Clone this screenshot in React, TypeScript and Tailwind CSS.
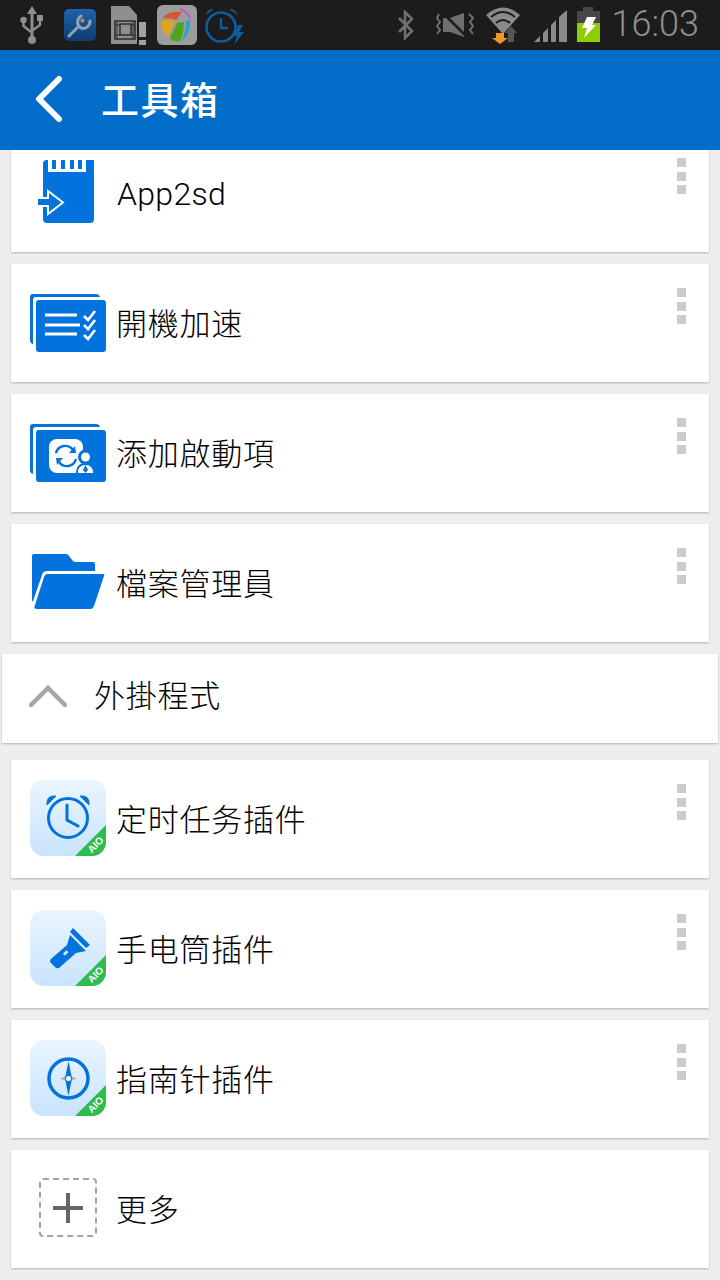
const CJK = '[font-family:Roboto,"Noto_Sans_CJK_SC",sans-serif]';

function UsbIcon() {
  return (
    <svg width="26" height="40" viewBox="0 0 26 40" className="ml-[19px] mt-[6px] shrink-0">
      <path d="M13 0 L8 8 H18 Z" fill="#8e8e8e" />
      <rect x="11.5" y="6" width="3" height="28" fill="#8e8e8e" />
      <circle cx="13" cy="34" r="4" fill="#8e8e8e" />
      <circle cx="4.5" cy="14" r="3.2" fill="#8e8e8e" />
      <rect x="18" y="9" width="6" height="6" fill="#8e8e8e" />
      <path d="M4.5 15 V20 L12 26 M21 14 V19 L14 24" stroke="#8e8e8e" strokeWidth="2.4" fill="none" />
    </svg>
  );
}

function WrenchTile() {
  return (
    <div className="ml-[19px] mt-[9px] h-[32px] w-[32px] shrink-0 rounded-[5px] bg-gradient-to-b from-[#1d64ac] to-[#0c3d70]">
      <svg width="32" height="32" viewBox="0 0 32 32">
        <path d="M5 27 L15 17 M17 7 A7 7 0 0 0 17 19 A7 7 0 0 0 26 12" stroke="#8fa3b6" strokeWidth="3" fill="none" strokeLinecap="round" />
        <circle cx="18.5" cy="11.5" r="2" fill="#d28a2e" />
      </svg>
    </div>
  );
}

function SimIcon() {
  return (
    <svg width="36" height="40" viewBox="0 0 36 40" className="ml-[15px] mt-[5px] shrink-0">
      <path d="M0 1 H18 L26 10 V39 H0 Z" fill="#8f8f8f" />
      <rect x="4" y="16" width="20" height="18" fill="none" stroke="#2c2c2c" strokeWidth="1.5" />
      <rect x="9" y="19" width="11" height="11" fill="none" stroke="#2c2c2c" strokeWidth="1.5" />
      <path d="M6 16 V34 M22 16 V34 M4 20 H9 M4 30 H9 M20 20 H24 M20 30 H24" stroke="#2c2c2c" strokeWidth="1" />
      <rect x="28" y="17" width="7" height="15" fill="#a0a0a0" />
      <rect x="28" y="35" width="7" height="5" fill="#a0a0a0" />
    </svg>
  );
}

function FruitTile() {
  return (
    <div className="ml-[10px] mt-[5px] h-[40px] w-[40px] shrink-0 rounded-[6px] bg-[#9c9c9c]">
      <svg width="40" height="40" viewBox="0 0 40 40">
        <path d="M5 14 Q11 5 25 7 L19 15 Q12 12 5 14 Z" fill="#d2592c" />
        <path d="M5 16 Q13 14 18 17 L11 31 Q3 26 5 16 Z" fill="#e2a41e" />
        <path d="M20 18 L27 17 Q27 28 23 36 Q17 37 13 33 Z" fill="#4ca618" />
        <path d="M29 16 L33 15 Q34 28 25 36 Q29 26 29 16 Z" fill="#22a8d0" />
        <path d="M23 4 Q30 6 33 13" stroke="#c456cc" strokeWidth="2" fill="none" />
      </svg>
    </div>
  );
}

function AlarmBolt() {
  return (
    <svg width="40" height="38" viewBox="0 0 40 38" className="ml-[8px] mt-[7px] shrink-0">
      <circle cx="16" cy="20" r="14.5" stroke="#0f5c9e" strokeWidth="2.6" fill="none" />
      <path d="M16 11 V21 H23" stroke="#0f5c9e" strokeWidth="2.4" fill="none" />
      <path d="M1 8 Q3 1 9 2 Z M24 2 Q30 1 33 8 Z" fill="#0f5c9e" />
      <path d="M33 18 L28 29 H32 L29 38 L39 25 H34 L38 18 Z" fill="#0f5c9e" />
    </svg>
  );
}

function StatusRight() {
  return (
    <div className="ml-auto flex items-start">
      <svg width="18" height="30" viewBox="0 0 18 30" className="mt-[10px] shrink-0">
        <path d="M2 8 L15 21 L8 28 V2 L15 9 L2 22" stroke="#6f6f6f" strokeWidth="2.6" fill="none" />
      </svg>
      <svg width="38" height="26" viewBox="0 0 38 26" className="ml-[21px] mt-[12px] shrink-0">
        <path d="M7 6 H14 L28 1 V25 L14 20 H7 Z" fill="#6f6f6f" />
        <path d="M8 2 L30 24" stroke="#1c1c1c" strokeWidth="2.5" />
        <path d="M3 2 L1 6 L4 10 L1 14 L4 18 L1 22 M33 2 L37 6 L34 10 L37 14 L34 18 L37 22" stroke="#6f6f6f" strokeWidth="2" fill="none" />
      </svg>
      <svg width="34" height="38" viewBox="0 0 34 38" className="ml-[12px] mt-[6px] shrink-0">
        <path d="M0 9 Q17 -6 34 9 L17 28 Z" fill="#8a8a8a" />
        <path d="M5 11 Q17 1 29 11" stroke="#1c1c1c" strokeWidth="2" fill="none" />
        <path d="M10 17 Q17 11 24 17" stroke="#1c1c1c" strokeWidth="2" fill="none" />
        <path d="M10 27 H18 V32 H22 L14 38 L6 32 H10 Z" fill="#f0962a" />
        <path d="M25 20 L31 27 H28 V36 H22 V27 H19 Z" fill="#555555" />
      </svg>
      <svg width="34" height="32" viewBox="0 0 34 32" className="ml-[14px] mt-[10px] shrink-0">
        <path d="M0 32 L6 26 V32 Z M9 23 L14 18 V32 H9 Z M17 15 L22 10 V32 H17 Z M25 7 L33 0 V32 H25 Z" fill="#8a8a8a" />
      </svg>
      <div className="ml-[9px] mt-[7px] flex w-[23px] shrink-0 flex-col items-center">
        <div className="h-[4px] w-[10px] bg-[#474747]" />
        <div className="relative h-[31px] w-[23px] bg-[#474747]">
          <div className="absolute inset-x-0 bottom-0 h-[19px] bg-[#8fcc00]" />
          <svg width="23" height="31" viewBox="0 0 23 31" className="absolute inset-0">
            <path d="M10 6 H19 L15 14 H19 L7 27 L10 17 H5 Z" fill="#ffffff" />
          </svg>
        </div>
      </div>
      <span className="ml-[12px] mr-[21px] mt-[2px] font-['Roboto'] text-[36px] font-light leading-[44px] text-[#8f8f8f]">16:03</span>
    </div>
  );
}

function SdIcon() {
  return (
    <svg width="60" height="66" viewBox="0 0 60 66" className="ml-[6px]">
      <path d="M7 4 Q7 0 11 0 H54 Q58 0 58 4 V59 Q58 63 54 63 H11 Q7 63 7 59 Z" fill="#0273dc" />
      <path d="M12 0 V12 H54 V0 Z" fill="#ffffff" />
      <rect x="16" y="0" width="4" height="9" fill="#0273dc" />
      <rect x="25" y="0" width="4" height="9" fill="#0273dc" />
      <rect x="34" y="0" width="4" height="9" fill="#0273dc" />
      <rect x="42" y="0" width="4" height="9" fill="#0273dc" />
      <rect x="50" y="0" width="8" height="12" fill="#0273dc" />
      <path d="M1 38 H12 V31 L27 42.5 L12 54 V46 H1 Z" fill="#0273dc" stroke="#ffffff" strokeWidth="2" />
    </svg>
  );
}

function StackTile({ children }: { children: React.ReactNode }) {
  return (
    <svg width="76" height="58" viewBox="0 0 76 58">
      <path d="M3 0 H66 Q69 0 70 3 H6 Q3 3 3 6 V50 Q0 49 0 46 V3 Q0 0 3 0 Z" fill="#0273dc" />
      <rect x="6" y="6" width="70" height="52" rx="3" fill="#0273dc" />
      {children}
    </svg>
  );
}

function ChecklistIcon() {
  return (
    <StackTile>
      <path d="M15 21 H47 M15 31 H50 M15 40 H47" stroke="#ffffff" strokeWidth="3" />
      <path d="M54 22 L58 26 L65 17 M54 31 L58 35 L65 26 M54 41 L58 45 L65 36" stroke="#ffffff" strokeWidth="2.6" fill="none" />
    </StackTile>
  );
}

function SyncUserIcon() {
  return (
    <StackTile>
      <rect x="19" y="15" width="34" height="34" rx="8" fill="#ffffff" />
      <path d="M26 29 A9.5 9.5 0 0 1 43 26 M46 35 A9.5 9.5 0 0 1 29 38" stroke="#0273dc" strokeWidth="2.4" fill="none" />
      <path d="M39 29 L46 29 L45 22 Z M33 34 L26 34 L27 41 Z" fill="#0273dc" />
      <circle cx="55.5" cy="33" r="7.5" fill="#0273dc" />
      <circle cx="55.5" cy="33" r="4.5" fill="#ffffff" />
      <path d="M46 50 Q46 39 55.5 39 Q65 39 65 50 Z" fill="#0273dc" />
      <path d="M48 49 Q48 41 55.5 41 Q63 41 63 49 Z" fill="#ffffff" />
      <path d="M55.5 41 L53 46 L55.5 49 L58 46 Z" fill="#0273dc" />
    </StackTile>
  );
}

function FolderIcon() {
  return (
    <svg width="74" height="55" viewBox="0 0 74 55" className="mb-[3px] ml-[1px]">
      <path d="M1 2 Q1 0 3 0 H35 Q37 0 38 2 L42 7 Q43 8 45 8 H62 Q64 8 64 10 V17 H16 Q12 17 11 21 L2 47 Q1 48 1 46 Z" fill="#0273dc" />
      <path d="M16 20 H72 Q74 20 73 22 L63 52 Q62 55 59 55 H6 Q2 55 4 51 L13 23 Q14 20 16 20 Z" fill="#0273dc" />
    </svg>
  );
}

function AioTile({ children }: { children: React.ReactNode }) {
  return (
    <div className="relative mb-[2px] h-[76px] w-[76px] overflow-hidden rounded-[14px] bg-gradient-to-b from-[#eaf5fe] to-[#c9e4fd]">
      {children}
      <div className="absolute bottom-0 right-0 h-0 w-0 border-b-[31px] border-l-[31px] border-b-[#2dbd4f] border-l-transparent" />
      <span className="absolute bottom-[6px] right-[1px] -rotate-45 font-['Liberation_Sans'] text-[10px] font-bold leading-[10px] text-white">AIO</span>
    </div>
  );
}

function ClockIcon() {
  return (
    <AioTile>
      <svg width="76" height="76" viewBox="0 0 76 76" className="absolute inset-0">
        <circle cx="38" cy="38" r="19.5" stroke="#0273dc" strokeWidth="3" fill="none" />
        <path d="M37 25 V40 L48 46" stroke="#0273dc" strokeWidth="3" fill="none" strokeLinecap="round" />
        <path d="M17 25 Q16 15 26 16 Z M50 16 Q60 15 59 25 Z" fill="#0273dc" stroke="#0273dc" />
      </svg>
    </AioTile>
  );
}

function TorchIcon() {
  return (
    <AioTile>
      <svg width="76" height="76" viewBox="0 0 76 76" className="absolute inset-0">
        <path d="M43 18 L60 35 L56 38 L40 22 Z" fill="#0273dc" />
        <path d="M40 25 L56 41 L46 43 L29 58 Q27 59 25 57 L21 53 Q19 51 21 49 L37 35 Z" fill="#0273dc" />
        <rect x="33" y="42" width="5" height="3" fill="#cfe6fd" transform="rotate(-45 35 43)" />
      </svg>
    </AioTile>
  );
}

function CompassIcon() {
  return (
    <AioTile>
      <svg width="76" height="76" viewBox="0 0 76 76" className="absolute inset-0">
        <circle cx="38.5" cy="38.5" r="19.5" stroke="#0273dc" strokeWidth="3.5" fill="none" />
        <path d="M30 38.5 L38 35 L47 38.5 L38 42 Z" fill="#a9b4bf" />
        <path d="M38.5 21 L42 38.5 L38.5 56 L35 38.5 Z" fill="#0273dc" />
        <circle cx="38.5" cy="38.5" r="2.5" fill="#ffffff" />
      </svg>
    </AioTile>
  );
}

function PlusIcon() {
  return (
    <div className="mb-[3px] ml-[9px] flex h-[59px] w-[58px] items-center justify-center rounded-[4px] border-2 border-dashed border-[#a2a2a2]">
      <svg width="30" height="30" viewBox="0 0 30 30" className="-ml-[1px]">
        <path d="M15 0 V30 M0 15 H30" stroke="#666666" strokeWidth="4" />
      </svg>
    </div>
  );
}

function Dots() {
  return (
    <div className="ml-auto mr-[23px] mt-[24px] flex flex-col gap-[4.5px] self-start">
      <div className="h-[9px] w-[9px] bg-[#cccccc]" />
      <div className="h-[9px] w-[9px] bg-[#cccccc]" />
      <div className="h-[9px] w-[9px] bg-[#cccccc]" />
    </div>
  );
}

function Card({ icon, label, dots = true, latin = false }: { icon: React.ReactNode; label: string; dots?: boolean; latin?: boolean }) {
  return (
    <div className="mx-[11px] mb-[12px] flex h-[118px] items-center bg-white pl-[19px] shadow-[0_1px_2px_rgba(0,0,0,0.25)]">
      <div className="flex w-[87px] shrink-0 items-center">{icon}</div>
      {latin ? (
        <span className={`${CJK} mt-[2px] text-[32px] font-light leading-[40px] tracking-[0.3px] text-black`}>{label}</span>
      ) : (
        <span className={`${CJK} -ml-[1px] mt-[4px] text-[31px] font-light leading-[40px] tracking-[0.75px] text-black`}>{label}</span>
      )}
      {dots && <Dots />}
    </div>
  );
}

export default function App() {
  return (
    <div className="flex h-[1280px] w-[720px] flex-col overflow-hidden bg-[#eeeeee]">
      {/* Status bar */}
      <div className="flex h-[50px] shrink-0 items-start bg-[#1c1c1c]">
        <UsbIcon />
        <WrenchTile />
        <SimIcon />
        <FruitTile />
        <AlarmBolt />
        <StatusRight />
      </div>

      {/* Header */}
      <div className="z-10 flex h-[100px] shrink-0 items-center bg-[#016dc9]">
        <svg width="30" height="48" viewBox="0 0 30 48" className="mb-[2px] ml-[34px] shrink-0">
          <path d="M25 4 L5 24 L25 44" stroke="#ffffff" strokeWidth="6" fill="none" strokeLinecap="round" strokeLinejoin="round" />
        </svg>
        <span className={`ml-[37px] mt-[2px] ${CJK} text-[38px] font-medium leading-[48px] tracking-[1.5px] text-white`}>工具箱</span>
      </div>

      {/* List */}
      <div className="-mt-[16px] flex flex-col">
        <Card icon={<SdIcon />} label="App2sd" latin />
        <Card icon={<ChecklistIcon />} label="開機加速" />
        <Card icon={<SyncUserIcon />} label="添加啟動項" />
        <Card icon={<FolderIcon />} label="檔案管理員" />

        <div className="mx-[2px] mb-[17px] flex h-[89px] items-center bg-white pl-[27px] shadow-[0_1px_2px_rgba(0,0,0,0.25)]">
          <svg width="38" height="24" viewBox="0 0 38 24" className="mb-[6px] shrink-0">
            <path d="M2 21 L19 4 L36 21" stroke="#a6a6a6" strokeWidth="4.5" fill="none" strokeLinecap="round" />
          </svg>
          <span className={`mb-[4px] ml-[27px] ${CJK} text-[31px] font-light leading-[40px] tracking-[0.75px] text-black`}>外掛程式</span>
        </div>

        <Card icon={<ClockIcon />} label="定时任务插件" />
        <Card icon={<TorchIcon />} label="手电筒插件" />
        <Card icon={<CompassIcon />} label="指南针插件" />
        <Card icon={<PlusIcon />} label="更多" dots={false} />
      </div>
    </div>
  );
}
